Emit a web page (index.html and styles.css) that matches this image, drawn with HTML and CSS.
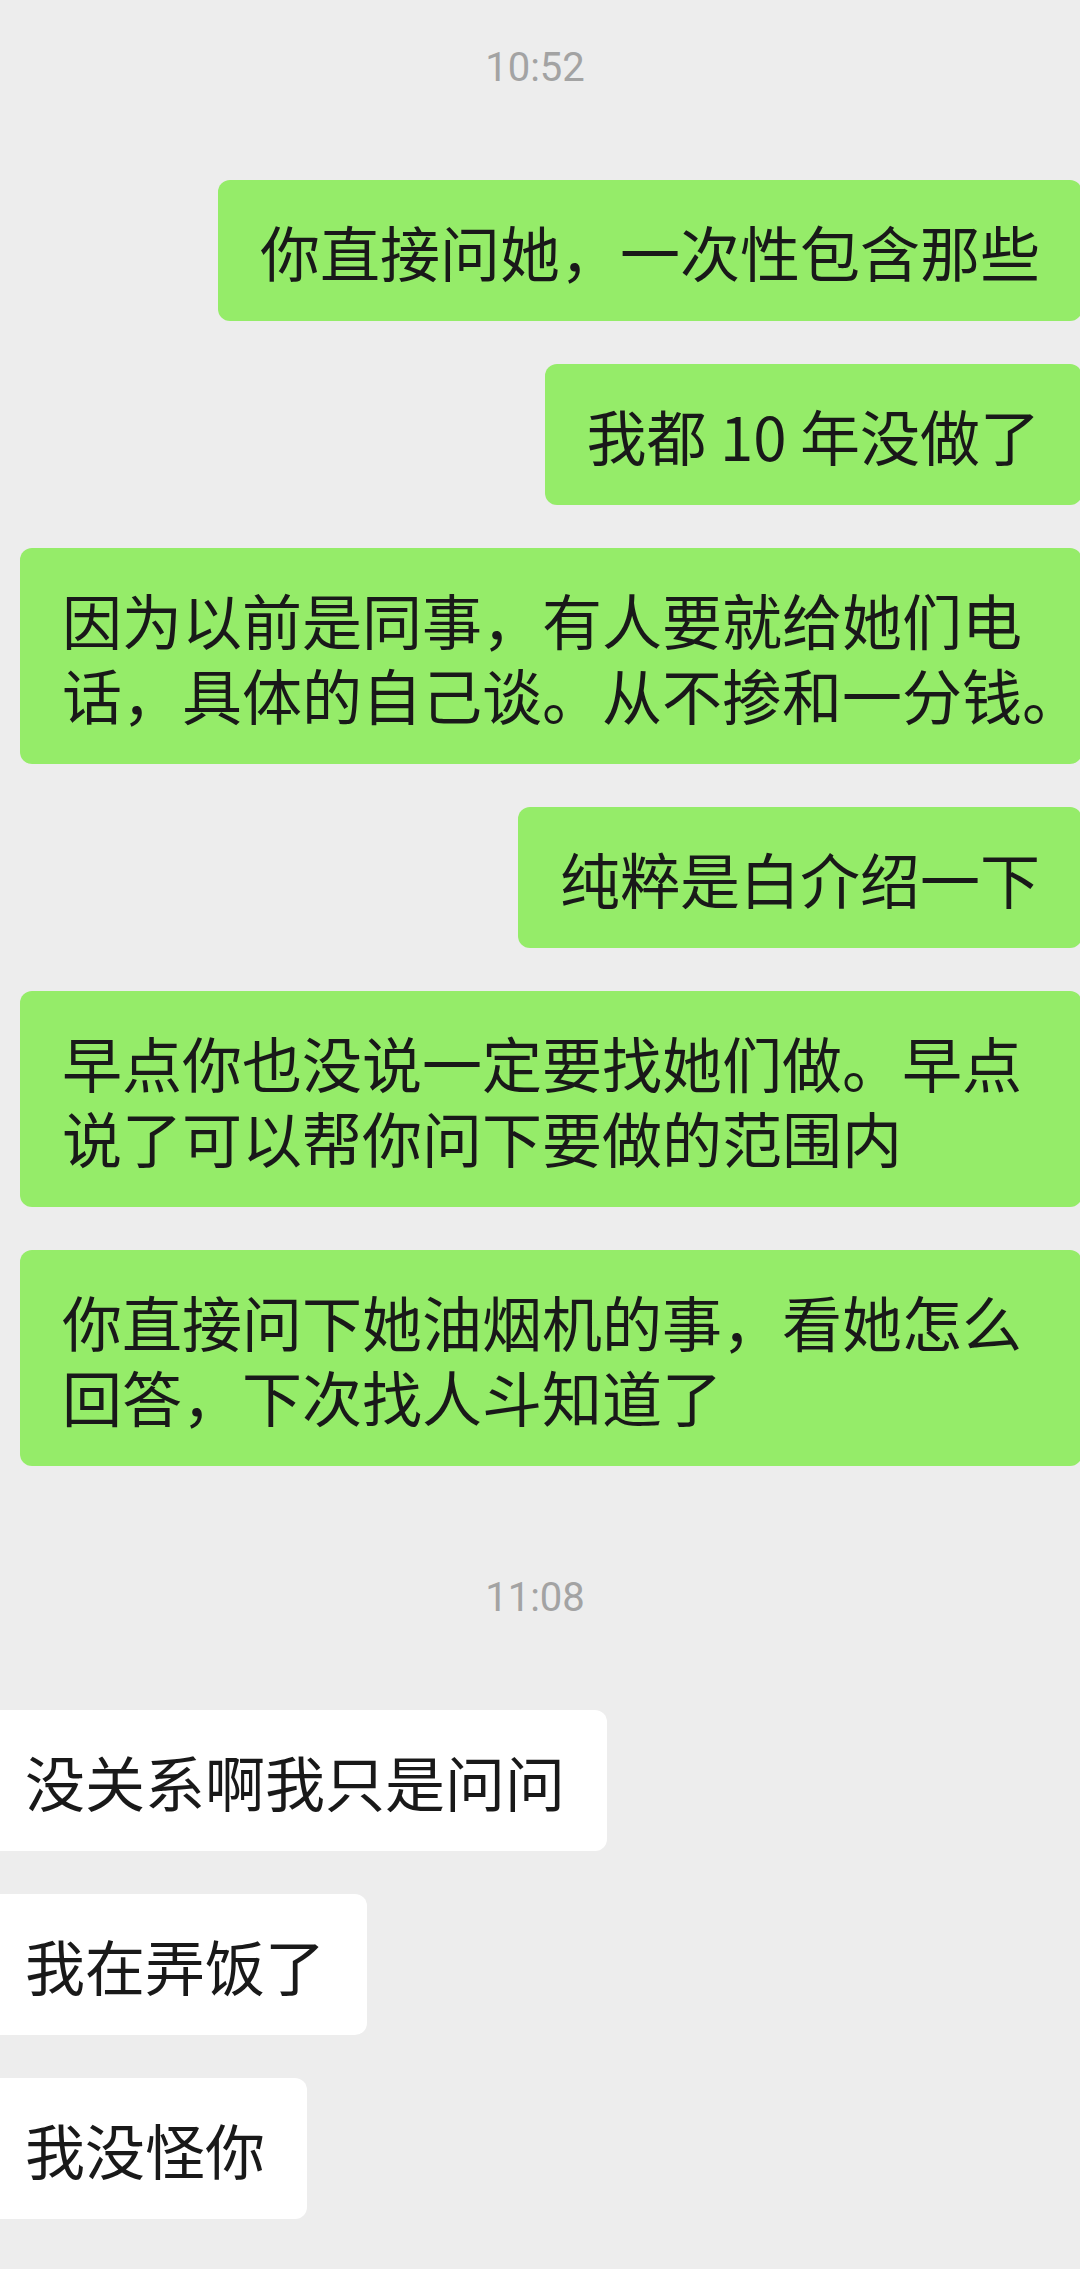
FILE: index.html
```html
<!DOCTYPE html>
<html lang="zh-CN">
<head>
  <meta charset="UTF-8" />
  <meta name="viewport" content="width=device-width, initial-scale=1.0"/>
  <title>聊天记录</title>
  <link rel="stylesheet" href="styles.css">
</head>
<body>

  <main class="chat">
    <div class="time">10:52</div>

    <div class="row me">
      <div class="bubble">你直接问她，一次性包含那些</div>
    </div>
    <div class="row me">
      <div class="bubble">我都 10 年没做了</div>
    </div>
    <div class="row me">
      <div class="bubble full">因为以前是同事，有人要就给她们电<br>话，具体的自己谈。从不掺和一分钱。</div>
    </div>
    <div class="row me">
      <div class="bubble">纯粹是白介绍一下</div>
    </div>
    <div class="row me">
      <div class="bubble full">早点你也没说一定要找她们做。早点<br>说了可以帮你问下要做的范围内</div>
    </div>
    <div class="row me">
      <div class="bubble full">你直接问下她油烟机的事，看她怎么<br>回答，下次找人斗知道了</div>
    </div>

    <div class="time">11:08</div>

    <div class="row other">
      <div class="bubble">没关系啊我只是问问</div>
    </div>
    <div class="row other">
      <div class="bubble">我在弄饭了</div>
    </div>
    <div class="row other">
      <div class="bubble">我没怪你</div>
    </div>
  </main>

</body>
</html>
```

FILE: styles.css
```css
:root {
  --bg: #ededed;
  --green: #95ec69;
  --white: #ffffff;
  --text: #191919;
  --muted: #a3a3a3;
}

* {
  box-sizing: border-box;
  margin: 0;
  padding: 0;
}

body {
  background: var(--bg);
  color: var(--text);
  font-family: 'Noto Sans CJK SC', 'Noto Sans', sans-serif;
  height: 2269px;
  overflow: hidden;
}

.chat {
  display: block;
  overflow: hidden;
}

.time {
  margin: 112px 0 92px;
  padding-right: 10px;
  text-align: center;
  font-family: Roboto, 'Noto Sans', sans-serif;
  font-size: 40px;
  line-height: 40px;
  color: var(--muted);
}

.time:first-child {
  margin-top: 48px;
}

.row {
  display: flex;
  margin-bottom: 43px;
}

.row.me {
  justify-content: flex-end;
  margin-right: -2px;
  margin-left: 20px;
}

.row.other {
  justify-content: flex-start;
  margin-left: -17px;
}

.bubble {
  padding: 33px 42px;
  border-radius: 12px;
  font-size: 60px;
  line-height: 75px;
  white-space: nowrap;
}

.me .bubble {
  background: var(--green);
}

.other .bubble {
  background: var(--white);
}

/* two-line bubbles take the whole row, last punctuation may hang */
.bubble.full {
  flex: 1;
  min-width: 0;
}
```
